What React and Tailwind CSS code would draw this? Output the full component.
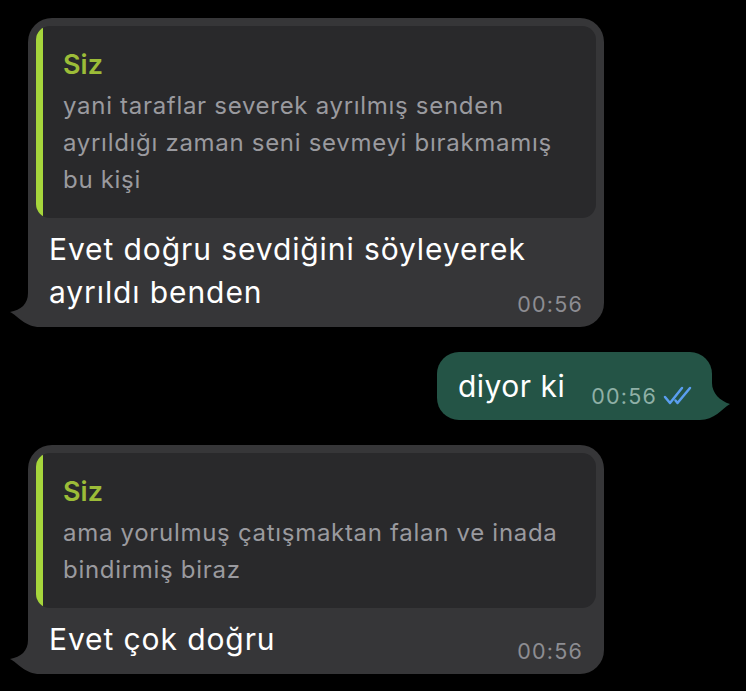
import React from "react";

const font = { fontFamily: "Inter, 'Noto Sans', sans-serif" };

const TailLeft = () => (
  <svg
    className="absolute left-[-20px] bottom-0"
    width="48"
    height="42"
    viewBox="0 0 48 42"
  >
    <path d="M20 0 L20 8 C20 19 13 25 2 27 C10 31 17 42 32 42 L48 42 L48 0 Z" fill="#363638" />
  </svg>
);

const TailRight = () => (
  <svg
    className="absolute right-[-20px] bottom-0"
    width="44"
    height="39"
    viewBox="0 0 44 39"
  >
    <path d="M24 0 L24 2 C24 12 32 20 42 23 C34 28 26 39 12 39 L0 39 L0 0 Z" fill="#245446" />
  </svg>
);

const DoubleCheck = () => (
  <svg width="30" height="20" viewBox="0 0 30 20" className="mb-[3px] ml-[6px]">
    <path
      d="M2 12 L7 18 L19 3 M12.5 15.5 L14.5 18 L27 3"
      fill="none"
      stroke="#5a9ef0"
      strokeWidth="2.5"
      strokeLinecap="round"
      strokeLinejoin="round"
    />
  </svg>
);

const Quote = ({ lines }) => (
  <div className="flex overflow-hidden rounded-[14px] bg-[#29292b]">
    <div className="w-[7px] shrink-0 bg-[#a6d63c]" />
    <div className="pl-[20px] pr-4 pt-[22px] pb-[20px]">
      <div className="mb-[5px] text-[27px] leading-[34px] font-semibold text-[#9cbc38]">Siz</div>
      <div className="text-[24px] leading-[37px] tracking-[0.7px] text-[#9a9a9f]">
        {lines.map((l, i) => (
          <div key={i} className="whitespace-nowrap">
            {l}
          </div>
        ))}
      </div>
    </div>
  </div>
);

const Incoming = ({ quote, lines }) => (
  <div className="relative ml-[28px] w-[576px] rounded-[24px] bg-[#363638] p-2 pb-[13px]">
    <TailLeft />
    <Quote lines={quote} />
    <div className="relative mt-[10px] pl-[13px] text-[30px] leading-[43px] tracking-[0.9px] text-white">
      {lines.map((l, i) => (
        <div key={i} className="whitespace-nowrap">
          {l}
        </div>
      ))}
    </div>
    <div className="absolute right-[21px] bottom-[11px] text-[21.5px] leading-[24px] tracking-[1.2px] text-[#8d8d92]">
      00:56
    </div>
  </div>
);

export default function App() {
  return (
    <div className="flex h-[691px] w-[746px] flex-col overflow-hidden bg-black pt-[18px]" style={font}>
      <Incoming
        quote={[
          "yani taraflar severek ayrılmış senden",
          "ayrıldığı zaman seni sevmeyi bırakmamış",
          "bu kişi",
        ]}
        lines={["Evet doğru sevdiğini söyleyerek", "ayrıldı benden"]}
      />

      <div className="relative mt-[25px] mr-[34px] flex items-end self-end rounded-[22px] bg-[#245446] pt-[13px] pb-[12px] pl-[21px] pr-[19px]">
        <TailRight />
        <span className="relative text-[30px] leading-[43px] tracking-[0.5px] text-white">diyor ki</span>
        <span className="relative ml-[26px] text-[21.5px] leading-[24px] tracking-[1.2px] text-[#8fb0a6]">
          00:56
        </span>
        <span className="relative">
          <DoubleCheck />
        </span>
      </div>

      <div className="mt-[25px]">
        <Incoming
          quote={["ama yorulmuş çatışmaktan falan ve inada", "bindirmiş biraz"]}
          lines={["Evet çok doğru"]}
        />
      </div>
    </div>
  );
}
